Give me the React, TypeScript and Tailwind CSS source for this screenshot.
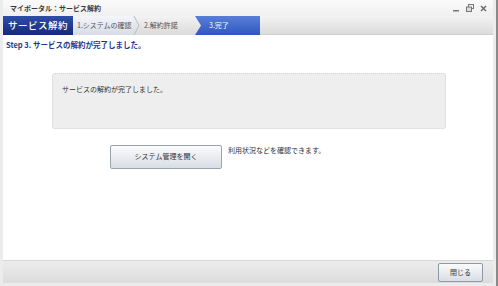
const jp = "font-['Noto_Sans_CJK_JP','Noto_Sans',sans-serif]";

function Chevron() {
    return (
        <svg width="8" height="19" viewBox="0 0 8 19" className="shrink-0">
            <polyline points="1,0 6,9.5 1,19" fill="none" stroke="#b4bcc8" strokeWidth="1" />
        </svg>
    );
}

export default function App() {
    return (
        <div className={`flex h-[286px] w-[498px] flex-col whitespace-nowrap border-r-2 border-[#8a8a8a] bg-[#ececec] px-[3px] pb-[3px] ${jp}`}>
            {/* title bar */}
            <div className="flex h-[16px] shrink-0 items-center justify-between bg-gradient-to-b from-[#fafafa] to-[#f0f0f0] pl-[7px] pr-[6px]">
                <span className="text-[7px] font-bold leading-none text-[#3a3a3a]">マイポータル：サービス解約</span>
                <div className="flex items-center gap-[6px] text-[#666]">
                    <svg width="7" height="7" viewBox="0 0 7 7"><rect x="0" y="5" width="6" height="1.5" fill="#777" /></svg>
                    <svg width="8" height="8" viewBox="0 0 8 8">
                        <rect x="2.5" y="0.5" width="5" height="4" fill="none" stroke="#777" />
                        <rect x="0.5" y="3" width="5" height="4.5" fill="#ddd" stroke="#777" />
                    </svg>
                    <svg width="7" height="7" viewBox="0 0 7 7">
                        <path d="M1 1 L6 6 M6 1 L1 6" stroke="#666" strokeWidth="1.4" />
                    </svg>
                </div>
            </div>

            {/* step bar */}
            <div className="flex h-[19px] shrink-0 items-stretch bg-gradient-to-b from-[#f3f3f3] to-[#dadada] text-[7px] leading-none">
                <div className="flex w-[70px] items-center justify-center bg-gradient-to-b from-[#2f4ea8] to-[#15297a] text-[9.5px] font-medium tracking-[0.5px] text-white">
                    サービス解約
                </div>
                <div className="flex w-[60px] items-center bg-gradient-to-b from-[#f4f6fa] to-[#d6dbe6] pl-[4px] text-[#555]">1.システムの確認</div>
                <Chevron />
                <div className="flex w-[54px] items-center pl-[3px] text-[#555]">2.解約許諾</div>
                <div className="flex w-[65px] items-center bg-gradient-to-b from-[#5a7fd8] to-[#2f56c0] pl-[14px] text-white [clip-path:polygon(0_0,100%_0,100%_100%,0_100%,6px_50%)]">
                    3.完了
                </div>
                <div className="flex-1 border-b border-[#cfcfcf]" />
            </div>

            {/* content */}
            <div className="flex flex-1 flex-col bg-white">
                <div className="pl-[3px] pt-[6px] text-[7.5px] font-bold leading-none text-[#1c3a8a]">Step 3. サービスの解約が完了しました。</div>
                <div className="ml-[49px] mt-[24px] h-[56px] w-[394px] rounded-[3px] border border-dotted border-[#d2d2d2] bg-[#eeeeee] pl-[9px] pt-[12px] text-[7px] leading-none text-[#333]">
                    サービスの解約が完了しました。
                </div>
                <div className="ml-[107px] mt-[16px] flex items-start gap-[6px]">
                    <button className="flex h-[24px] w-[112px] items-center justify-center rounded-[2px] border border-[#9aa3b0] bg-gradient-to-b from-[#fbfbfc] to-[#d9dde4] text-[7px] text-[#333]">
                        システム管理を開く
                    </button>
                    <span className="pt-[2px] text-[7px] leading-none text-[#333]">利用状況などを確認できます。</span>
                </div>
            </div>

            {/* footer */}
            <div className="flex h-[23px] shrink-0 items-center justify-end border-t border-[#d6d6d6] bg-gradient-to-b from-[#ececec] to-[#dcdcdc] pr-[10px]">
                <button className="flex h-[19px] w-[45px] items-center justify-center rounded-[2px] border border-[#8f98a6] bg-gradient-to-b from-[#fbfbfc] to-[#d9dde4] text-[7px] text-[#333]">
                    閉じる
                </button>
            </div>
        </div>
    );
}
